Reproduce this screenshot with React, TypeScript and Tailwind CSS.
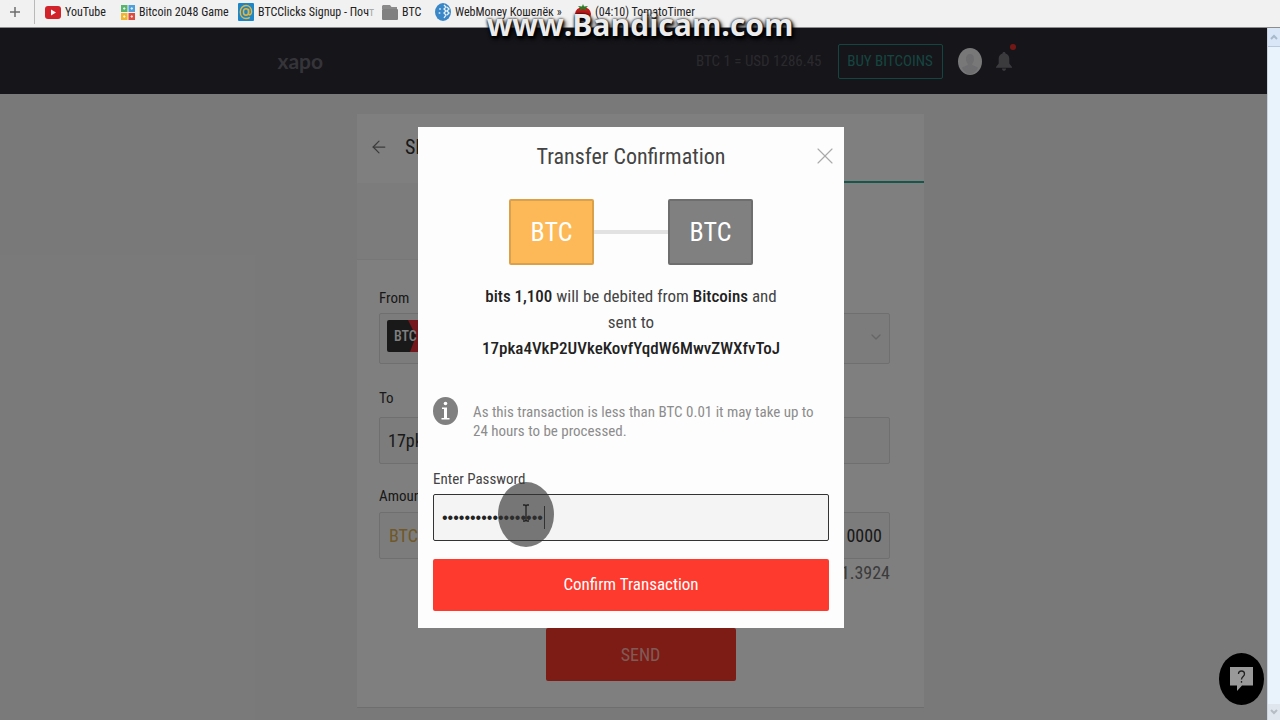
import { ArrowLeft, ChevronDown, X } from "lucide-react";

const ADDRESS = "17pka4VkP2UVkeKovfYqdW6MwvZWXfvToJ";

function YouTubeIcon() {
  return (
    <svg width="16" height="13" viewBox="0 0 16 13">
      <rect width="16" height="13" rx="3" fill="#d2232a" />
      <path d="M6 3.5v6l5-3z" fill="#fff" />
    </svg>
  );
}

function GameIcon() {
  return (
    <svg width="14" height="15" viewBox="0 0 14 15">
      <rect width="6.5" height="7" fill="#58b46c" />
      <rect x="7.5" width="6.5" height="7" fill="#4f9fd8" />
      <rect y="8" width="6.5" height="7" fill="#efb52c" />
      <rect x="7.5" y="8" width="6.5" height="7" fill="#dc4b3e" />
      <path d="M2 3.5h2.5M9.5 3.5H12M2 11.5h2.5M9.5 11.5H12M3.2 2v3M10.8 2v3M3.2 10v3M10.8 10v3" stroke="#fff" strokeOpacity=".7" />
    </svg>
  );
}

function MailIcon() {
  return (
    <svg width="16" height="18" viewBox="0 0 16 18">
      <rect width="16" height="18" rx="1" fill="#1c86c8" />
      <ellipse cx="8" cy="9" rx="2.6" ry="3.2" fill="none" stroke="#e5b53c" strokeWidth="1.5" />
      <path d="M10.6 5.8v4.6c0 2.4 3 1.8 3-1.6C13.6 4.8 11 2.5 8 2.5S2.3 5 2.3 9s2.5 6.5 5.7 6.5c1.6 0 2.8-.4 3.8-1.2" fill="none" stroke="#e5b53c" strokeWidth="1.5" />
    </svg>
  );
}

function FolderIcon() {
  return (
    <svg width="16" height="15" viewBox="0 0 16 15">
      <path d="M1 0h7l1.5 2H15v2H0V1z" fill="#8b8b8b" />
      <rect y="4" width="16" height="11" rx="1" fill="#808080" />
    </svg>
  );
}

function WebMoneyIcon() {
  return (
    <svg width="16" height="18" viewBox="0 0 16 18">
      <ellipse cx="8" cy="9" rx="8" ry="9" fill="#3a87c8" />
      <path d="M9 2l2 2-2 2 2 2-2 2 2 2-2 3M12 4l2 2-2 2 2 2-2 2" fill="none" stroke="#e6f1fa" strokeWidth="1.3" />
      <circle cx="5" cy="6" r="1" fill="#bcd9ef" />
      <circle cx="4.5" cy="10" r="1" fill="#bcd9ef" />
    </svg>
  );
}

function TomatoIcon() {
  return (
    <svg width="16" height="18" viewBox="0 0 16 18">
      <ellipse cx="8" cy="11" rx="8" ry="7" fill="#c3191b" />
      <path d="M8 1l1 2.5 4-.5-2.5 2.5L12 8 8 6 4 8l1.5-2.5L3 3l4 .5z" fill="#2c7a25" />
    </svg>
  );
}

function BookmarksBar() {
  return (
    <nav className="h-7 shrink-0 bg-[#f2f1f1] border-b border-[#8d8d8d] flex items-start text-xs text-[#222] whitespace-nowrap">
      <button className="w-[35px] pr-1 h-6 border-r border-[#b9b9b9] flex items-center justify-center mr-[10px]" aria-label="New tab">
        <svg width="12" height="12" viewBox="0 0 12 12">
          <path d="M6 1v10M1 6h10" stroke="#6d6d6d" strokeWidth="1.5" />
        </svg>
      </button>
      <a href="#youtube" className="w-[76px] h-6 flex items-center gap-1"><YouTubeIcon />YouTube</a>
      <a href="#game" className="w-[117px] h-6 flex items-center gap-1"><GameIcon />Bitcoin 2048 Game</a>
      <a href="#btcclicks" className="w-36 h-6 flex items-center gap-1"><MailIcon /><span>BTCClicks Signup - Поч<span className="text-[#aaa]">т</span></span></a>
      <a href="#btc" className="w-[53px] h-6 flex items-center gap-1"><FolderIcon />BTC</a>
      <a href="#webmoney" className="w-[140px] h-6 flex items-center gap-1"><WebMoneyIcon />WebMoney Кошелёк »</a>
      <a href="#tomato" className="h-6 flex items-center gap-1"><TomatoIcon />(04:10) TomatoTimer</a>
    </nav>
  );
}

function SiteHeader() {
  return (
    <header className="h-[66px] bg-[#2c2a34] pl-[22px] flex items-center justify-center">
      <div className="w-[734px] flex items-center">
        <a href="#home" className="mr-auto text-[21px] leading-6 font-bold text-[#6a6972] font-[Lato,sans-serif]">xapo</a>
        <span className="text-[15px] text-[#55545b] mr-4">BTC 1 = USD 1286.45</span>
        <button className="h-[35px] w-[105px] rounded-xs border border-[#2a8a80] text-[15px] text-[#2a8a80] mr-[15px]">BUY BITCOINS</button>
        <svg width="24" height="27" viewBox="0 0 24 27" className="mr-[14px]">
          <ellipse cx="12" cy="13.5" rx="12" ry="13.5" fill="#f0f0f2" />
          <path d="M12 6c3 0 4 2.5 4 5s-1 4-2 5c0 2 5 2 6 4-2 4-5 6-8 6s-6-2-8-6c1-2 6-2 6-4-1-1-2-2.5-2-5s1-5 4-5z" fill="#dcdce0" />
        </svg>
        <button className="relative" aria-label="Notifications">
          <svg width="16" height="19" viewBox="0 0 16 19">
            <path d="M8 0c1 0 1.5.7 1.5 1.6C12 2.3 13.3 4.5 13.3 7v4.5L16 15v.7H0V15l2.7-3.5V7C2.7 4.5 4 2.3 6.5 1.6 6.5.7 7 0 8 0zM6 16.5h4c0 1.5-1 2.3-2 2.3s-2-.8-2-2.3z" fill="#77767d" />
          </svg>
          <span className="absolute -top-2 -right-1 size-[6px] rounded-full bg-[#e8302c]" />
        </button>
      </div>
    </header>
  );
}

function SendCard() {
  return (
    <main className="pl-[14px] pt-5 flex justify-center">
      <section className="w-[567px] bg-white border-b border-[#dcdcdc]">
        <div className="h-[69px] grid grid-cols-2">
          <div className="flex items-center gap-4 pl-3 pb-1 text-xl text-[#333]">
            <ArrowLeft size={20} strokeWidth={1.5} color="#777" />
            SEND
          </div>
          <div className="border-b-2 border-[#2fae97]" />
        </div>
        <div className="h-[77px] grid grid-cols-2">
          <div className="bg-[#f8f8f8] border-b border-[#eee]" />
        </div>
        <form className="pt-7 pb-[26px] text-[#333]">
          <div className="pl-[22px] pr-[34px]">
            <label htmlFor="from" className="block text-[15px] leading-5 mb-[5px]">From</label>
            <div className="relative mb-6">
              <select id="from" className="appearance-none block w-full h-[51px] bg-[#f8f8f8] border border-[#dedede] rounded-xs pl-14">
                <option></option>
              </select>
              <span className="absolute left-2 top-[7px] w-12 h-8 rounded-xs overflow-hidden bg-[#333]">
                <svg width="48" height="32" viewBox="0 0 48 32" className="absolute inset-0">
                  <path d="M21 0l8 16-6 16h25V0z" fill="#e8303a" />
                </svg>
                <span className="relative pl-[7px] leading-8 text-sm font-medium text-white">BTC</span>
              </span>
              <ChevronDown size={16} strokeWidth={2} className="absolute right-[6px] top-4 text-[#ccc]" />
            </div>
            <label htmlFor="to" className="block text-[15px] leading-5 mb-[9px]">To</label>
            <input id="to" defaultValue={ADDRESS} className="block w-full h-[47px] bg-[#f8f8f8] border border-[#dedede] rounded-xs px-2 text-lg mb-[22px]" />
            <label htmlFor="amount" className="block text-[15px] leading-5 mb-[6px]">Amount</label>
            <div className="flex items-center h-[47px] bg-[#f8f8f8] border border-[#dedede] rounded-xs pl-[9px] pr-[7px] text-lg">
              <span className="text-[#e0b050]">BTC</span>
              <input id="amount" defaultValue="0000" className="flex-1 min-w-0 text-right" />
            </div>
            <div className="text-right text-lg leading-7 text-[#777] mb-[41px]">1.3924</div>
          </div>
          <button type="button" className="block mx-auto w-[190px] h-[53px] rounded-xs bg-[#fb382b] text-lg text-[#ffb5ad]">SEND</button>
        </form>
      </section>
    </main>
  );
}

function Cursor() {
  return (
    <div className="absolute left-[65px] -top-3 w-14 h-[65px] rounded-[50%] bg-[#333]/65 pointer-events-none">
      <svg width="8" height="18" viewBox="0 0 8 18" className="absolute left-6 top-[22px]">
        <path d="M1 1h2l1 1 1-1h2M4 2v14M1 17h2l1-1 1 1h2" fill="none" stroke="#222" strokeWidth="1.3" />
      </svg>
    </div>
  );
}

function ConfirmDialog() {
  return (
    <div role="dialog" aria-labelledby="dialog-title" className="relative w-[426px] bg-[#fdfdfd] px-[15px] pt-4 pb-[17px] text-[#444]">
      <h2 id="dialog-title" className="text-center text-[22px] leading-7">Transfer Confirmation</h2>
      <button className="absolute right-[5px] top-[15px]" aria-label="Close">
        <X size={28} strokeWidth={1} color="#aaa" />
      </button>
      <div className="mt-7 flex items-center justify-center text-[26px] text-white">
        <div className="w-[85px] h-[66px] rounded-xs border-2 border-[#dba148] bg-[#fdb957] flex items-center justify-center">BTC</div>
        <div className="w-[74px] h-1 bg-[#e2e2e2]" />
        <div className="w-[85px] h-[66px] rounded-xs border-2 border-[#6e6e6e] bg-[#808080] flex items-center justify-center">BTC</div>
      </div>
      <p className="mt-[18px] text-center text-[17px] leading-[26px]">
        <b className="font-medium text-[#222]">bits 1,100</b> will be debited from <b className="font-medium text-[#222]">Bitcoins</b> and
        <br />
        sent to
        <br />
        <b className="font-medium text-[#222]">{ADDRESS}</b>
      </p>
      <div className="mt-9 flex gap-[15px]">
        <svg width="25" height="28" viewBox="0 0 25 28" className="shrink-0">
          <ellipse cx="12.5" cy="14" rx="12.5" ry="14" fill="#808080" />
          <circle cx="12.5" cy="6.5" r="1.8" fill="#fff" />
          <path d="M9 10.5h5v10.5h2.5v1.5h-8V21H11v-9H9z" fill="#fff" />
        </svg>
        <p className="pt-[6px] text-[15px] leading-[19px] text-[#8c8c8c]">
          As this transaction is less than BTC 0.01 it may take up to 24 hours to be processed.
        </p>
      </div>
      <label htmlFor="password" className="mt-7 block text-[15px] leading-5">Enter Password</label>
      <div className="relative mt-[5px]">
        <input id="password" type="password" defaultValue="correcthorsestaple" className="block w-full h-[47px] rounded-xs border border-[#333] bg-[#f4f4f4] px-2 text-base text-[#222] outline-none font-['Liberation_Sans',sans-serif]" />
        <span className="absolute left-[111px] top-3 w-px h-[23px] bg-[#333]" />
        <Cursor />
      </div>
      <button className="mt-[18px] block w-full h-[52px] rounded-xs bg-[#fe392e] text-[17px] text-white">Confirm Transaction</button>
    </div>
  );
}

export default function App() {
  return (
    <div className="relative min-h-screen flex flex-col overflow-hidden font-['Roboto_Condensed','Liberation_Sans_Narrow',Roboto,sans-serif]">
      <BookmarksBar />
      <div className="flex-1 flex">
        <div className="relative flex-1 bg-[#f3f3f3]">
          <SiteHeader />
          <SendCard />
          {/* Modal backdrop */}
          <div className="absolute inset-0 bg-black/50 pt-[99px] pr-[5px] flex items-start justify-center">
            <ConfirmDialog />
          </div>
          <button className="absolute right-[3px] bottom-[15px] w-[45px] h-[52px] rounded-[50%] bg-black flex items-center justify-center" aria-label="Help">
            <svg width="23" height="24" viewBox="0 0 23 24">
              <path d="M0 0h23v18.5h-11L7 24v-5.5H0z" fill="#999" />
              <path d="M8.5 7c0-4 6-4 6 0 0 2.5-3 2.5-3 5.5M11.5 14v1.8" fill="none" stroke="#222" strokeWidth="1.3" />
            </svg>
          </button>
        </div>
        {/* Scrollbar */}
        <div className="w-[13px] bg-[#e9f3fb] border-l border-[#c9d6e2] flex flex-col items-center justify-between">
          <div className="w-full h-[19px] bg-[#d8e6f8] border-b border-[#b9c9dc] flex items-center justify-center">
            <svg width="8" height="6" viewBox="0 0 8 6"><path d="M1 5l3-3 3 3" fill="none" stroke="#a9b9cc" strokeWidth="2" /></svg>
          </div>
          <div className="w-full h-4 bg-[#dfe6ee] flex items-center justify-center">
            <svg width="8" height="6" viewBox="0 0 8 6"><path d="M1 1l3 3 3-3" fill="none" stroke="#b5bcc4" strokeWidth="2" /></svg>
          </div>
        </div>
      </div>
      {/* Recorder watermark */}
      <div className="absolute inset-x-0 top-0 text-center text-[30px] leading-[50px] font-bold text-[#ececec] font-['Open_Sans',sans-serif] [text-shadow:0_0_3px_#000,1px_2px_3px_#000,2px_3px_5px_#000] pointer-events-none">
        www.Bandicam.com
      </div>
    </div>
  );
}
